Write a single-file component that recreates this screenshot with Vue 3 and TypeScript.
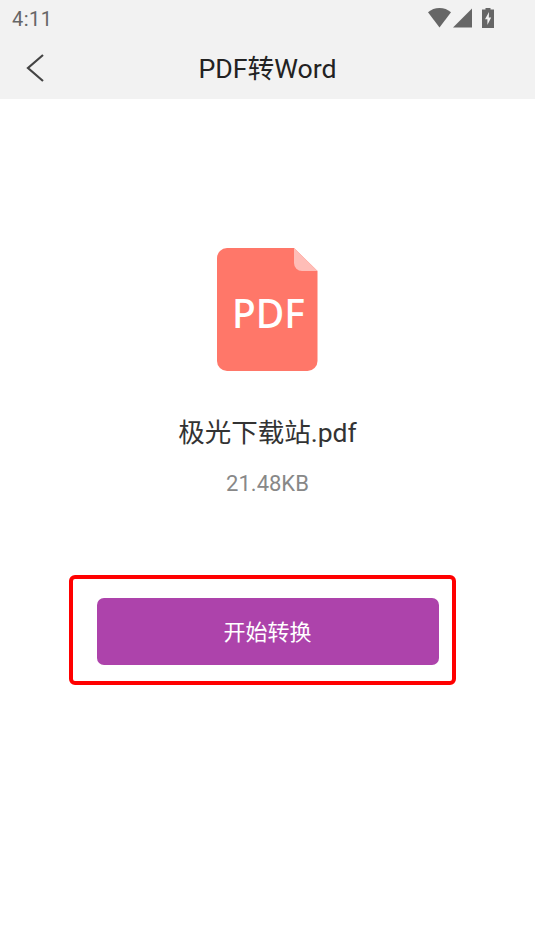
<script setup lang="ts">
const fileName = '极光下载站.pdf'
const fileSize = '21.48KB'
</script>

<template>
  <div class="page">
    <header class="top">
      <div class="status-bar">
        <span class="clock">4:11</span>
        <div class="status-icons">
          <svg width="23" height="20" viewBox="0 0 23 20" aria-hidden="true">
            <path d="M0 4.2C3.2 1.6 7.2 0 11.5 0S19.8 1.6 23 4.2L11.5 19.5Z" fill="#666" />
          </svg>
          <svg class="signal" width="19" height="20" viewBox="0 0 19 20" aria-hidden="true">
            <path d="M0 19.5 19 0.5V19.5Z" fill="#666" />
          </svg>
          <svg class="battery" width="12" height="20" viewBox="0 0 12 20" aria-hidden="true">
            <path d="M3.5 0H8.5V1.6H12V20H0V1.6H3.5Z" fill="#666" />
            <path d="M7 4 3 11.2H5.4V17L9.2 9.4H6.8Z" fill="#f2f2f2" />
          </svg>
        </div>
      </div>
      <div class="title-bar">
        <button type="button" class="back" aria-label="返回">
          <svg width="20" height="30" viewBox="0 0 20 30" aria-hidden="true">
            <path d="M18 2 3 15 18 28" fill="none" stroke="#444" stroke-width="2.2" />
          </svg>
        </button>
        <h1 class="title">PDF转Word</h1>
      </div>
    </header>

    <main class="content">
      <svg class="file-icon" width="101" height="123" viewBox="0 0 101 123" aria-hidden="true">
        <path d="M10 0H77L100.5 23V113A10 10 0 0 1 90.500 123H10A10 10 0 0 1 0 113V10A10 10 0 0 1 10 0Z" fill="#ff7769" />
        <path d="M77 0 100.500 23H85A8 8 0 0 1 77 15Z" fill="#ffbdb7" />
        <text x="51.500" y="80" text-anchor="middle" class="file-icon-text">PDF</text>
      </svg>
      <p class="file-name">{{ fileName }}</p>
      <p class="file-size">{{ fileSize }}</p>
      <div class="highlight">
        <button type="button" class="convert">开始转换</button>
      </div>
    </main>
  </div>
</template>

<style scoped>
.page {
  width: 535px;
  height: 951px;
  background: #fff;
  font-family: Roboto, "Noto Sans CJK SC", sans-serif;
  overflow: hidden;
}
.top {
  background: #f2f2f2;
  height: 99px;
}
.status-bar {
  height: 37px;
  display: flex;
  align-items: center;
  justify-content: space-between;
  padding: 0 41px 0 12px;
}
.clock {
  font-size: 20px;
  color: #666;
  letter-spacing: 0.5px;
}
.status-icons {
  display: flex;
  align-items: center;
  gap: 2px;
  margin-bottom: 2px;
}
.battery {
  margin-left: 8px;
}
.title-bar {
  position: relative;
  height: 62px;
  display: flex;
  align-items: center;
  justify-content: center;
  padding-bottom: 3px;
  box-sizing: border-box;
}
.back {
  position: absolute;
  left: 25px;
  top: 16px;
  padding: 0;
  border: 0;
  background: none;
  display: flex;
}
.title {
  margin: 0;
  font-size: 26.700px;
  font-weight: 400;
  color: #222;
}
.content {
  display: flex;
  flex-direction: column;
  align-items: center;
  padding-top: 149px;
}
.file-icon-text {
  font-family: "Noto Sans", sans-serif;
  font-size: 39px;
  font-weight: 500;
  fill: #fff;
}
.file-name {
  margin: 44px 0 0;
  font-size: 26.500px;
  line-height: 36px;
  color: #333;
}
.file-size {
  margin: 19px 0 0;
  font-size: 22px;
  line-height: 28px;
  color: #888;
}
.highlight {
  box-sizing: border-box;
  width: 387px;
  height: 110px;
  margin: 77px 10px 0 0;
  padding: 19px 0 0 24px;
  border: 4px solid #f00;
  border-radius: 6px;
}
.convert {
  display: block;
  width: 342px;
  height: 67px;
  padding: 0 1px 4px 0;
  border: 0;
  border-radius: 7px;
  background: #ad43ab;
  color: #fff;
  font-family: inherit;
  font-size: 22px;
}
</style>

<style>
html,
body {
  margin: 0;
  background: #fff;
}
</style>
